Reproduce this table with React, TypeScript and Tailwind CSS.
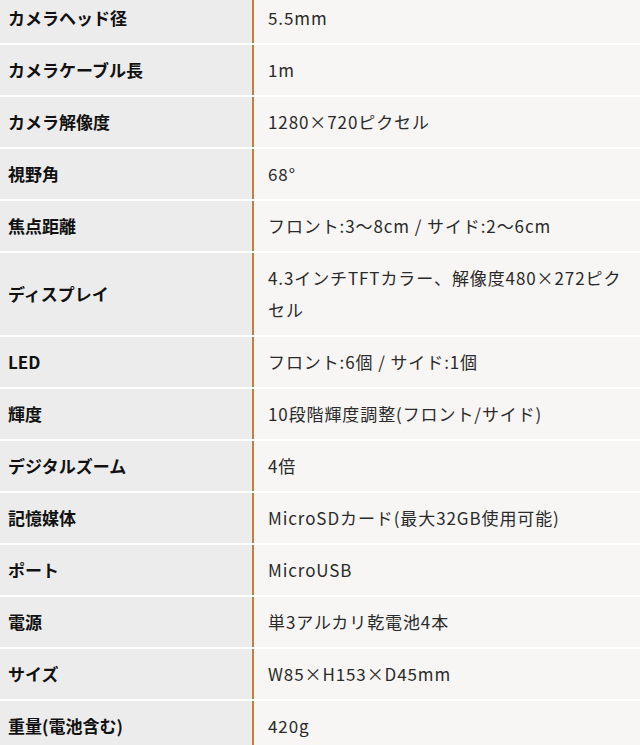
const specs: [string, string][] = [
  ['カメラヘッド径', '5.5mm'],
  ['カメラケーブル長', '1m'],
  ['カメラ解像度', '1280×720ピクセル'],
  ['視野角', '68°'],
  ['焦点距離', 'フロント:3〜8cm / サイド:2〜6cm'],
  ['ディスプレイ', '4.3インチTFTカラー、解像度480×272ピクセル'],
  ['LED', 'フロント:6個 / サイド:1個'],
  ['輝度', '10段階輝度調整(フロント/サイド)'],
  ['デジタルズーム', '4倍'],
  ['記憶媒体', 'MicroSDカード(最大32GB使用可能)'],
  ['ポート', 'MicroUSB'],
  ['電源', '単3アルカリ乾電池4本'],
  ['サイズ', 'W85×H153×D45mm'],
  ['重量(電池含む)', '420g'],
];

export default function App() {
  return (
    <div className="w-[640px] h-[745px] overflow-hidden bg-white">
      <div
        className="-mt-[7px] flex flex-col gap-[2px] text-[17px] leading-[32px]"
        style={{ fontFamily: '"Noto Sans CJK JP", "Noto Sans", sans-serif' }}
      >
        {specs.map(([label, value]) => (
          <div key={label} className="flex">
            <div className="w-[252px] shrink-0 flex items-center bg-[#ececec] pl-2 py-[9px] font-bold text-[#111111]">
              {label}
            </div>
            <div className="flex-1 border-l-2 border-[#c47d3e] bg-[#f7f6f4] pl-[14px] pr-[12px] py-[9px] tracking-[0.9px] text-[#2a2a2a]">
              {value}
            </div>
          </div>
        ))}
      </div>
    </div>
  );
}
